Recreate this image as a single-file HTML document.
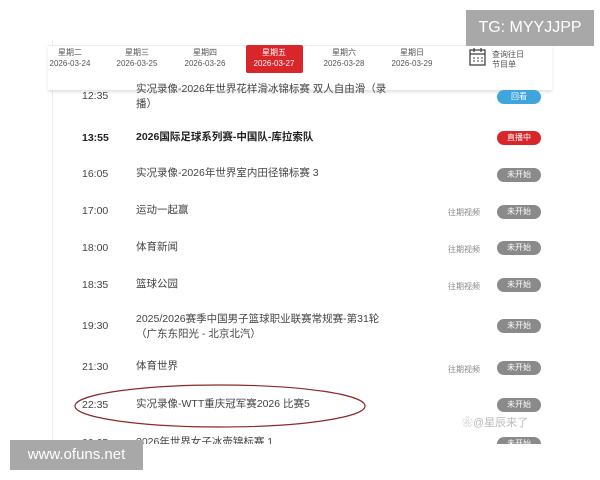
<!DOCTYPE html>
<html><head><meta charset="utf-8"><style>
*{margin:0;padding:0;box-sizing:border-box}
body{width:600px;height:480px;background:#fff;position:relative;overflow:hidden;font-family:"Liberation Sans","Noto Sans CJK SC",sans-serif;color:#333}
.a{position:absolute;white-space:nowrap}
.card{position:absolute;left:52px;top:40px;width:500px;height:440px;background:#fff;border-left:1px solid #eee}
.bar{position:absolute;left:48px;top:45px;width:504px;height:45px;background:#fff;box-shadow:0 2px 3px rgba(0,0,0,.12);border-top:1px solid #eee}
.day{position:absolute;top:47px;width:60px;text-align:center;font-size:8px;line-height:11px;color:#555}
.t{position:absolute;left:82px;font-size:10.5px;color:#444}
.n{position:absolute;left:136px;font-size:10.5px;color:#444;line-height:15px}
.b{position:absolute;left:497px;width:44px;height:14px;border-radius:7px;background:#8a8a8a;color:#fff;font-size:8px;text-align:center;line-height:14px}
.v{position:absolute;left:448px;font-size:8px;color:#888}
</style></head><body>
<div class="card"></div>
<div class="bar"></div>
<div class="day" style="left:40px">星期二<br>2026-03-24</div>
<div class="day" style="left:107px">星期三<br>2026-03-25</div>
<div class="day" style="left:175px">星期四<br>2026-03-26</div>
<div class="a" style="left:246px;top:45px;width:57px;height:28px;background:#d9262b;border-radius:2px"></div>
<div class="day" style="left:244px;color:#fff">星期五<br>2026-03-27</div>
<div class="day" style="left:314px">星期六<br>2026-03-28</div>
<div class="day" style="left:382px">星期日<br>2026-03-29</div>
<svg class="a" style="left:469px;top:47px" width="17" height="20" viewBox="0 0 17 20"><rect x="1" y="3" width="15" height="15" fill="none" stroke="#444" stroke-width="1.3"/><line x1="1" y1="7" x2="16" y2="7" stroke="#444" stroke-width="1.3"/><line x1="5" y1="1" x2="5" y2="5" stroke="#444" stroke-width="1.3"/><line x1="12" y1="1" x2="12" y2="5" stroke="#444" stroke-width="1.3"/><path d="M4 11h2M8 11h2M12 11h2M4 14h2M8 14h2M12 14h2" stroke="#444"/></svg>
<div class="a" style="left:492px;top:50px;font-size:8px;line-height:10px;color:#555">查询往日<br>节目单</div>

<div class="t" style="top:90px">12:35</div><div class="n" style="top:82px">实况录像-2026年世界花样滑冰锦标赛 双人自由滑（录<br>播）</div><div class="b" style="top:90px;background:#3ea6dc">回看</div>
<div class="t" style="top:132px;font-weight:bold;color:#222">13:55</div><div class="n" style="top:130px;font-weight:bold;color:#222">2026国际足球系列赛-中国队-库拉索队</div><div class="b" style="top:131px;background:#d9262b">直播中</div>
<div class="t" style="top:168px">16:05</div><div class="n" style="top:166px">实况录像-2026年世界室内田径锦标赛 3</div><div class="b" style="top:168px">未开始</div>
<div class="t" style="top:205px">17:00</div><div class="n" style="top:203px">运动一起赢</div><div class="v" style="top:207px">往期视频</div><div class="b" style="top:205px">未开始</div>
<div class="t" style="top:242px">18:00</div><div class="n" style="top:240px">体育新闻</div><div class="v" style="top:244px">往期视频</div><div class="b" style="top:241px">未开始</div>
<div class="t" style="top:279px">18:35</div><div class="n" style="top:277px">篮球公园</div><div class="v" style="top:281px">往期视频</div><div class="b" style="top:278px">未开始</div>
<div class="t" style="top:320px">19:30</div><div class="n" style="top:312px">2025/2026赛季中国男子篮球职业联赛常规赛-第31轮<br>（广东东阳光 - 北京北汽）</div><div class="b" style="top:319px">未开始</div>
<div class="t" style="top:361px">21:30</div><div class="n" style="top:359px">体育世界</div><div class="v" style="top:364px">往期视频</div><div class="b" style="top:361px">未开始</div>
<div class="t" style="top:399px">22:35</div><div class="n" style="top:397px">实况录像-WTT重庆冠军赛2026 比赛5</div><div class="b" style="top:398px">未开始</div>
<div class="t" style="top:437px">00:05</div><div class="n" style="top:435px">2026年世界女子冰壶锦标赛 1</div><div class="b" style="top:437px">未开始</div>
<div class="a" style="left:0;top:444px;width:600px;height:36px;background:#fff"></div>
<svg class="a" style="left:72px;top:383px" width="296" height="48"><ellipse cx="148" cy="23" rx="145" ry="21" fill="none" stroke="#8b2a2a" stroke-width="1.2"/></svg>
<div class="a" style="left:462px;top:414px;font-size:11px;color:#bbb">❀@星辰来了</div>
<div class="a" style="left:466px;top:10px;width:128px;height:36px;background:#a8a8a8;color:#fff;font-size:16px;line-height:36px;text-align:center">TG: MYYJJPP</div>
<div class="a" style="left:10px;top:440px;width:133px;height:30px;background:#a8a8a8;color:#fff;font-size:15px;line-height:30px;text-align:center">www.ofuns.net</div>
</body></html>
